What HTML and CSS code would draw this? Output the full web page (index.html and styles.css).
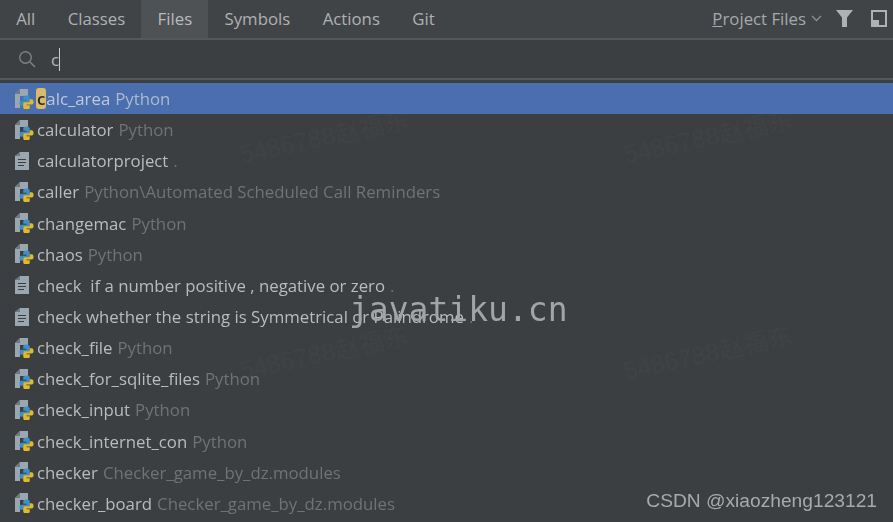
FILE: index.html
```html
<!DOCTYPE html>
<html lang="en">
<head>
<meta charset="utf-8">
<title>Search Everywhere</title>
<link rel="stylesheet" href="styles.css">
</head>
<body>
<svg class="defs" width="0" height="0">
  <defs>
    <symbol id="snake" viewBox="0 0 16 16">
      <path d="M8 .5C5 .5 4.500 1.500 4.500 3v2H8v1H2.500C1 6 .5 7 .5 8.500S1 11.500 2.500 11.500h2V10c0-1 .8-1.800 1.800-1.800h3.500c1 0 1.700-.7 1.700-1.700V3c0-1.500-1-2.500-3.500-2.500z" fill="#3d8fc7"/>
      <path d="M8 .5C5 .5 4.500 1.500 4.500 3v2H8v1H2.500C1 6 .5 7 .5 8.500S1 11.500 2.500 11.500h2V10c0-1 .8-1.800 1.800-1.800h3.500c1 0 1.700-.7 1.700-1.700V3c0-1.500-1-2.500-3.500-2.500z" fill="#e2b92c" transform="rotate(180 8 8)"/>
    </symbol>
    <symbol id="py" viewBox="0 0 20 20">
      <path d="M0 5 5 0h8v7H5v12H0z" fill="#9aa7b0"/>
      <path d="M5 0v5H0z" fill="#6e7a82"/>
      <use href="#snake" x="4" y="6" width="15" height="15"/>
    </symbol>
    <symbol id="doc" viewBox="0 0 20 20">
      <path d="M0 5 5 1h9v18H0z" fill="#9aa7b0"/>
      <path d="M5 1v4H0z" fill="#6e7a82"/>
      <path d="M3 8.500h8M3 11.500h8M3 14.500h6" stroke="#3c3f41" stroke-width="1.200"/>
    </symbol>
  </defs>
</svg>
<main class="popup">
  <header class="tabs">
    <nav class="tablist">
      <span class="tab">All</span>
      <span class="tab">Classes</span>
      <span class="tab active">Files</span>
      <span class="tab">Symbols</span>
      <span class="tab">Actions</span>
      <span class="tab">Git</span>
    </nav>
    <div class="tools">
      <span class="scope"><u>P</u>roject Files</span>
      <svg class="chev" width="11" height="7" viewBox="0 0 11 7"><path d="M1 1l4.500 4.500L10 1" fill="none" stroke="#8a8f92" stroke-width="1.300"/></svg>
      <svg class="funnel" width="17" height="17" viewBox="0 0 17 17"><path d="M0 0h17l-6 7.500V17H6V7.500z" fill="#afb1b3"/></svg>
      <svg class="pin" width="16" height="17" viewBox="0 0 16 17"><path d="M1 1h14v15H1z" fill="none" stroke="#afb1b3" stroke-width="2"/><path d="M1 10h7v6H1z" fill="#afb1b3"/></svg>
    </div>
  </header>
  <div class="search">
    <svg width="18" height="18" viewBox="0 0 18 18"><circle cx="7.500" cy="7.500" r="5.800" fill="none" stroke="#7e8183" stroke-width="1.400"/><path d="M12 12l5 5" stroke="#7e8183" stroke-width="1.600"/></svg>
    <span class="query">c</span><span class="caret"></span>
  </div>
  <div class="ghost g1">5486788赵福东</div>
  <div class="ghost g2">5486788赵福东</div>
  <div class="ghost g3">5486788赵福东</div>
  <div class="ghost g4">5486788赵福东</div>
  <ul class="results">
    <li class="row selected"><svg class="ico"><use href="#py"/></svg><span class="name"><mark>c</mark>alc_area</span> <span class="path">Python</span></li>
    <li class="row"><svg class="ico"><use href="#py"/></svg><span class="name">calculator</span> <span class="path">Python</span></li>
    <li class="row"><svg class="ico"><use href="#doc"/></svg><span class="name">calculatorproject</span> <span class="path">.</span></li>
    <li class="row"><svg class="ico"><use href="#py"/></svg><span class="name">caller</span> <span class="path">Python\Automated Scheduled Call Reminders</span></li>
    <li class="row"><svg class="ico"><use href="#py"/></svg><span class="name">changemac</span> <span class="path">Python</span></li>
    <li class="row"><svg class="ico"><use href="#py"/></svg><span class="name">chaos</span> <span class="path">Python</span></li>
    <li class="row"><svg class="ico"><use href="#doc"/></svg><span class="name">check&nbsp; if a number positive , negative or zero</span> <span class="path">.</span></li>
    <li class="row"><svg class="ico"><use href="#doc"/></svg><span class="name">check whether the string is Symmetrical or Palindrome</span> <span class="path">.</span></li>
    <li class="row"><svg class="ico"><use href="#py"/></svg><span class="name">check_file</span> <span class="path">Python</span></li>
    <li class="row"><svg class="ico"><use href="#py"/></svg><span class="name">check_for_sqlite_files</span> <span class="path">Python</span></li>
    <li class="row"><svg class="ico"><use href="#py"/></svg><span class="name">check_input</span> <span class="path">Python</span></li>
    <li class="row"><svg class="ico"><use href="#py"/></svg><span class="name">check_internet_con</span> <span class="path">Python</span></li>
    <li class="row"><svg class="ico"><use href="#py"/></svg><span class="name">checker</span> <span class="path">Checker_game_by_dz.modules</span></li>
    <li class="row"><svg class="ico"><use href="#py"/></svg><span class="name">checker_board</span> <span class="path">Checker_game_by_dz.modules</span></li>
  </ul>
  <div class="stamp">javatiku.cn</div>
  <div class="credit">CSDN @xiaozheng123121</div>
</main>
</body>
</html>
```
FILE: styles.css
```css
* { box-sizing: border-box; }
html, body { margin: 0; height: 100%; }
body {
  background: #3c3f41;
  font-family: "Open Sans", "Noto Sans", sans-serif;
  font-size: 16.8px;
  color: #bbbbbb;
  overflow: hidden;
}
.defs { position: absolute; }
.popup { position: relative; width: 893px; height: 522px; overflow: hidden; filter: blur(0.35px); }

.tabs {
  height: 40px;
  display: flex;
  justify-content: space-between;
  background: #414446;
  border-bottom: 2px solid #555759;
}
.tablist { display: flex; }
.tab {
  padding: 0 16.2px;
  height: 38px;
  line-height: 38px;
  color: #afb1b3;
}
.tab.active { background: #4e5254; color: #b9bbbd; }
.tools { display: flex; align-items: center; padding-right: 6px; height: 36px; }
.scope { color: #a6a9ab; }
.chev { margin-left: 5px; }
.funnel { margin-left: 14px; }
.pin { margin-left: 18px; }

.search {
  height: 40px;
  display: flex;
  align-items: center;
  padding-left: 18px;
  background: #3c3f41;
  border-bottom: 2px solid #555759;
}
.query { margin-left: 15px; color: #b5b7b9; }
.caret { width: 1px; height: 23px; background: #c8c8c8; margin-left: 0; }

.results { position: relative; list-style: none; margin: 3px 0 0; padding: 0; }
.row {
  height: 31.15px;
  display: flex;
  align-items: center;
  white-space: pre;
  padding-left: 15px;
}
.row.selected { background: #4b6eaf; }
.ico { width: 20px; height: 20px; margin-right: 2px; flex: none; }
.name { color: #bbbbbb; }
.path { color: #707375; margin-left: 5px; }
.selected .name { color: #c0c8d8; }
.selected .path { color: #aeb9cf; }
mark {
  display: inline-block;
  background: #d8bc6c;
  color: #2b2b2b;
  border-radius: 3px;
  line-height: 21px;
  font-weight: 600;
  margin-left: -1px;
  padding: 0 1px;
}

.ghost {
  position: absolute;
  font-family: "Liberation Sans", "Noto Sans CJK SC", sans-serif;
  font-size: 25px;
  line-height: 30px;
  color: #404346;
  white-space: nowrap;
  transform: rotate(-12deg);
}
.g1 { left: 238px; top: 122px; }
.g2 { left: 622px; top: 122px; }
.g3 { left: 238px; top: 338px; }
.g4 { left: 622px; top: 338px; }

.stamp {
  position: absolute;
  left: 349px;
  top: 288px;
  font-family: "DejaVu Sans Mono", monospace;
  font-size: 33px;
  line-height: 44px;
  color: #a2a4a6;
  white-space: nowrap;
}
.credit {
  position: absolute;
  right: 16px;
  top: 490px;
  font-family: "Liberation Sans", sans-serif;
  font-size: 19.2px;
  line-height: 22px;
  color: #a8a9aa;
  white-space: nowrap;
}
```
